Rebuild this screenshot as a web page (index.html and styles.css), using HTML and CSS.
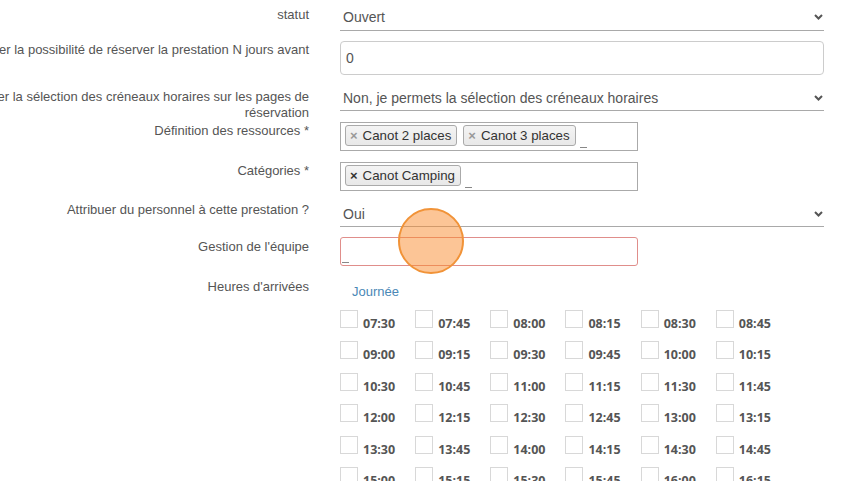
FILE: index.html
```html
<!DOCTYPE html>
<html lang="fr">
<head>
<meta charset="utf-8">
<title>Prestation</title>
<link rel="stylesheet" href="styles.css">
</head>
<body>
<form class="form">
  <div class="row r1">
    <div class="lbl">statut</div>
    <div class="ctl"><div class="select">Ouvert<svg class="chev" width="9" height="6" viewBox="0 0 9 6"><polyline points="1,1 4.5,4.5 8,1" fill="none" stroke="#555" stroke-width="2"/></svg></div></div>
  </div>
  <div class="row r2">
    <div class="lbl">Limiter la possibilité de réserver la prestation N jours avant</div>
    <div class="ctl"><div class="input">0</div></div>
  </div>
  <div class="row r3">
    <div class="lbl">Désactiver la sélection des créneaux horaires sur les pages de réservation</div>
    <div class="ctl"><div class="select s3">Non, je permets la sélection des créneaux horaires<svg class="chev" width="9" height="6" viewBox="0 0 9 6"><polyline points="1,1 4.5,4.5 8,1" fill="none" stroke="#555" stroke-width="2"/></svg></div></div>
  </div>
  <div class="row r4">
    <div class="lbl">Définition des ressources *</div>
    <div class="ctl"><div class="tagbox"><span class="tag"><span class="x">×</span>Canot 2 places</span><span class="tag"><span class="x">×</span>Canot 3 places</span><span class="cursor"></span></div></div>
  </div>
  <div class="row r5">
    <div class="lbl">Catégories *</div>
    <div class="ctl"><div class="tagbox"><span class="tag"><span class="x dark">×</span>Canot Camping</span><span class="cursor"></span></div></div>
  </div>
  <div class="row r6">
    <div class="lbl">Attribuer du personnel à cette prestation ?</div>
    <div class="ctl"><div class="select s6">Oui<svg class="chev" width="9" height="6" viewBox="0 0 9 6"><polyline points="1,1 4.5,4.5 8,1" fill="none" stroke="#555" stroke-width="2"/></svg></div></div>
  </div>
  <div class="row r7">
    <div class="lbl">Gestion de l'équipe</div>
    <div class="ctl"><div class="tagbox error"><span class="cursor first"></span></div></div>
  </div>
  <div class="row r8">
    <div class="lbl">Heures d'arrivées</div>
    <div class="ctl">
      <div class="day">Journée</div>
      <div class="times">
        <label class="time"><span class="cb"></span>07:30</label><label class="time"><span class="cb"></span>07:45</label><label class="time"><span class="cb"></span>08:00</label><label class="time"><span class="cb"></span>08:15</label><label class="time"><span class="cb"></span>08:30</label><label class="time"><span class="cb"></span>08:45</label>
        <label class="time"><span class="cb"></span>09:00</label><label class="time"><span class="cb"></span>09:15</label><label class="time"><span class="cb"></span>09:30</label><label class="time"><span class="cb"></span>09:45</label><label class="time"><span class="cb"></span>10:00</label><label class="time"><span class="cb"></span>10:15</label>
        <label class="time"><span class="cb"></span>10:30</label><label class="time"><span class="cb"></span>10:45</label><label class="time"><span class="cb"></span>11:00</label><label class="time"><span class="cb"></span>11:15</label><label class="time"><span class="cb"></span>11:30</label><label class="time"><span class="cb"></span>11:45</label>
        <label class="time"><span class="cb"></span>12:00</label><label class="time"><span class="cb"></span>12:15</label><label class="time"><span class="cb"></span>12:30</label><label class="time"><span class="cb"></span>12:45</label><label class="time"><span class="cb"></span>13:00</label><label class="time"><span class="cb"></span>13:15</label>
        <label class="time"><span class="cb"></span>13:30</label><label class="time"><span class="cb"></span>13:45</label><label class="time"><span class="cb"></span>14:00</label><label class="time"><span class="cb"></span>14:15</label><label class="time"><span class="cb"></span>14:30</label><label class="time"><span class="cb"></span>14:45</label>
        <label class="time"><span class="cb"></span>15:00</label><label class="time"><span class="cb"></span>15:15</label><label class="time"><span class="cb"></span>15:30</label><label class="time"><span class="cb"></span>15:45</label><label class="time"><span class="cb"></span>16:00</label><label class="time"><span class="cb"></span>16:15</label>
      </div>
    </div>
  </div>
</form>
<div class="touch"></div>
</body>
</html>
```
FILE: styles.css
```css
html, body {
  margin: 0;
  padding: 0;
  background: #fff;
  overflow: hidden;
}
body {
  font-family: "Liberation Sans", Arial, sans-serif;
  font-size: 13px;
  color: #555;
  width: 859px;
  height: 481px;
}
.form {
  margin-left: -91px;
  padding-top: 4px;
  width: 915px;
}
.row {
  display: grid;
  grid-template-columns: 400px 484px;
  column-gap: 31px;
}
.lbl {
  text-align: right;
  line-height: 16px;
}
.r1 .lbl { padding-top: 3px; }
.r2 { margin-top: 10px; }
.r2 .lbl { padding-top: 1px; }
.r3 { margin-top: 10px; }
.r3 .lbl { padding-top: 4px; }
.r4 { margin-top: 1px; }
.r4 .lbl { padding-top: 1px; }
.r5 { margin-top: 11px; }
.r5 .lbl { padding-top: 1px; }
.r6 { margin-top: 9px; }
.r6 .lbl { padding-top: 2px; }
.r7 { margin-top: 10px; }
.r7 .lbl { padding-top: 2px; }
.r8 { margin-top: 10px; }
.r8 .lbl { padding-top: 3px; }

.select {
  height: 26px;
  border-bottom: 1px solid #a9a9a9;
  display: flex;
  align-items: center;
  justify-content: space-between;
  padding: 0 1px 0 3px;
  font-size: 14px;
  color: #555;
}
.s3 { height: 25px; }
.s6 { height: 27px; padding-top: 1px; box-sizing: border-box; }
.chev { display: block; }

.input {
  height: 32px;
  border: 1px solid #ccc;
  border-radius: 4px;
  display: flex;
  align-items: center;
  padding: 0 5px;
  font-size: 14px;
  color: #555;
}

.tagbox {
  box-sizing: content-box;
  width: 288px;
  height: 25px;
  border: 1px solid #aaa;
  display: flex;
  align-items: flex-start;
  padding: 2px 4px 0;
  gap: 6px;
}
.tag {
  height: 19px;
  border: 1px solid #aaa;
  border-radius: 3px;
  background: linear-gradient(#f4f4f4, #e8e8e8);
  display: flex;
  align-items: center;
  padding: 0 5px 0 4px;
  font-size: 13.3px;
  color: #333;
  white-space: nowrap;
}
.x {
  font-weight: bold;
  font-size: 13px;
  color: #999;
  margin-right: 5px;
}
.x.dark { color: #333; }
.cursor {
  align-self: flex-end;
  width: 7px;
  height: 0;
  border-bottom: 1px solid #888;
  margin: 0 0 2px -2px;
}
.error {
  border-color: #e08e8b;
  border-radius: 3px;
  padding: 0;
  width: 296px;
  height: 27px;
}
.cursor.first {
  margin: 0 0 2px 1px;
}

.day {
  padding: 8px 0 0 12px;
  line-height: 16px;
  color: #4a88b6;
  font-size: 13px;
}
.times {
  margin-top: 8px;
  display: flex;
  flex-wrap: wrap;
  width: 484px;
  font-family: "Open Sans", sans-serif;
  font-weight: 700;
  font-size: 12.5px;
  color: #555;
}
.time {
  display: block;
  line-height: 31.4px;
  margin-right: 20px;
  white-space: nowrap;
}
.cb {
  display: inline-block;
  width: 16px;
  height: 16px;
  border: 1px solid #d8d8d8;
  vertical-align: baseline;
  margin-right: 5px;
  background: #fff;
}

.touch {
  position: absolute;
  left: 398px;
  top: 208px;
  width: 62px;
  height: 62px;
  border-radius: 50%;
  border: 2px solid #f19338;
  background: rgba(250, 140, 45, 0.5);
}
```
